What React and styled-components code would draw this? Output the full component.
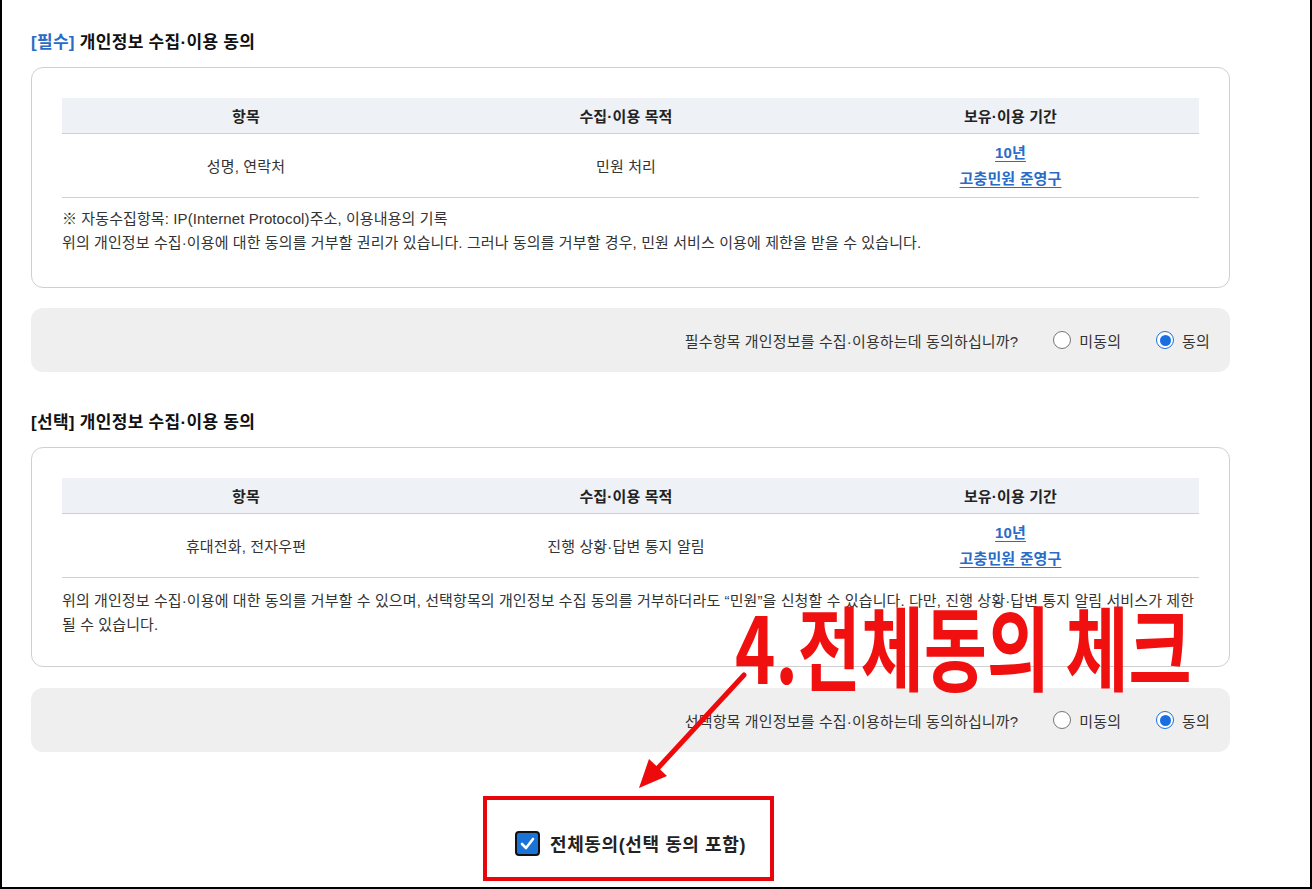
import React from "react";
import styled, { createGlobalStyle } from "styled-components";

const GlobalStyle = createGlobalStyle`
  html, body {
    margin: 0;
    padding: 0;
    background: #ffffff;
  }
  body {
    font-family: "Liberation Sans", "Noto Sans CJK KR", sans-serif;
    color: #333;
  }
`;

const Frame = styled.div`
  position: relative;
  box-sizing: border-box;
  width: 1312px;
  height: 889px;
  border-left: 2px solid #000;
  border-right: 2px solid #000;
  border-bottom: 2px solid #000;
  padding: 31px 80px 0 29px;
  overflow: hidden;
`;

const SectionTitle = styled.h2`
  margin: ${(p) => p.$top || 0}px 0 12px;
  font-size: 17px;
  line-height: 24px;
  font-weight: 700;
  letter-spacing: 0.3px;
  color: #111;
`;

const Tag = styled.span`
  color: ${(p) => (p.$blue ? "#2a6bc6" : "#111")};
`;

const Card = styled.div`
  border: 1px solid #cfcfcf;
  border-radius: 12px;
  padding: 30px 30px ${(p) => p.$bottom}px;
`;

const Table = styled.div`
  display: grid;
  grid-template-columns: 368px 392px 1fr;
`;

const HeadCell = styled.div`
  background: #eef1f5;
  height: 35px;
  border-bottom: 1px solid #cdd0d4;
  display: flex;
  align-items: center;
  justify-content: center;
  font-size: 15px;
  font-weight: 700;
  letter-spacing: 0.15px;
  color: #222;
`;

const BodyCell = styled.div`
  height: 63px;
  border-bottom: 1px solid #cdd0d4;
  display: flex;
  flex-direction: column;
  align-items: center;
  justify-content: center;
  font-size: 15px;
  letter-spacing: 0.15px;
  color: #333;
`;

const Link = styled.a`
  color: #2a6bc6;
  font-weight: 700;
  line-height: 26px;
  text-decoration: underline;
  text-underline-offset: 3px;
`;

const Note = styled.p`
  margin: ${(p) => p.$top}px 0 0;
  font-size: 15px;
  line-height: 24px;
  letter-spacing: 0.1px;
  color: #333;
`;

const AskBar = styled.div`
  margin-top: ${(p) => p.$top}px;
  height: 64px;
  border-radius: 12px;
  background: #efefef;
  display: flex;
  align-items: center;
  justify-content: flex-end;
  padding-right: 20px;
  font-size: 15px;
  letter-spacing: 0.15px;
  color: #333;
`;

const Question = styled.span`
  margin-right: 35px;
`;

const RadioLabel = styled.label`
  display: flex;
  align-items: center;
  gap: 8px;
  margin-left: ${(p) => (p.$first ? 0 : 35)}px;
`;

const RadioDot = styled.span`
  box-sizing: border-box;
  width: 18px;
  height: 18px;
  border-radius: 50%;
  background: #fff;
  border: 1px solid ${(p) => (p.$on ? "#1a6fe0" : "#767676")};
  display: flex;
  align-items: center;
  justify-content: center;
  &::after {
    content: "";
    display: ${(p) => (p.$on ? "block" : "none")};
    width: 11px;
    height: 11px;
    border-radius: 50%;
    background: #1a6fe0;
  }
`;

const AllAgree = styled.div`
  margin-top: 78px;
  display: flex;
  justify-content: center;
  align-items: center;
  gap: 10px;
  font-size: 18px;
  letter-spacing: 0.6px;
  font-weight: 700;
  color: #222;
  height: 26px;
`;

const CheckBox = styled.span`
  box-sizing: border-box;
  width: 25px;
  height: 25px;
  border: 2px solid #111;
  border-radius: 4px;
  background: #1a73d6;
  display: flex;
  align-items: center;
  justify-content: center;
`;

const RedBox = styled.div`
  position: absolute;
  left: 481px;
  top: 796px;
  width: 291px;
  height: 85px;
  box-sizing: border-box;
  border: 4px solid #e8050c;
  pointer-events: none;
`;

const BigNote = styled.div`
  position: absolute;
  left: 733px;
  top: 598px;
  font-family: "Noto Sans CJK KR", sans-serif;
  font-size: 92px;
  line-height: 1;
  font-weight: 700;
  color: #f01010;
  white-space: nowrap;
  transform: scaleX(0.745);
  transform-origin: left top;
  pointer-events: none;
`;

const Arrow = styled.svg`
  position: absolute;
  left: 620px;
  top: 660px;
  pointer-events: none;
`;

function Radio({ on, first, children }) {
  return (
    <RadioLabel $first={first}>
      <RadioDot $on={on} />
      {children}
    </RadioLabel>
  );
}

function Consent({ rows, purpose, notes, noteTop, bottom }) {
  return (
    <Card $bottom={bottom}>
      <Table>
        <HeadCell>항목</HeadCell>
        <HeadCell>수집·이용 목적</HeadCell>
        <HeadCell>보유·이용 기간</HeadCell>
        <BodyCell>{rows}</BodyCell>
        <BodyCell>{purpose}</BodyCell>
        <BodyCell>
          <Link>10년</Link>
          <Link>고충민원 준영구</Link>
        </BodyCell>
      </Table>
      <Note $top={noteTop}>
        {notes.map((n, i) => (
          <React.Fragment key={i}>
            {i > 0 && <br />}
            {n}
          </React.Fragment>
        ))}
      </Note>
    </Card>
  );
}

export default function App() {
  return (
    <>
      <GlobalStyle />
      <Frame>
        <SectionTitle>
          <Tag $blue>[필수]</Tag> 개인정보 수집·이용 동의
        </SectionTitle>
        <Consent
          rows="성명, 연락처"
          purpose="민원 처리"
          noteTop={9}
          bottom={32}
          notes={[
            "※ 자동수집항목: IP(Internet Protocol)주소, 이용내용의 기록",
            "위의 개인정보 수집·이용에 대한 동의를 거부할 권리가 있습니다. 그러나 동의를 거부할 경우, 민원 서비스 이용에 제한을 받을 수 있습니다.",
          ]}
        />
        <AskBar $top={20}>
          <Question>필수항목 개인정보를 수집·이용하는데 동의하십니까?</Question>
          <Radio first>미동의</Radio>
          <Radio on>동의</Radio>
        </AskBar>

        <SectionTitle $top={39}>
          <Tag>[선택]</Tag> 개인정보 수집·이용 동의
        </SectionTitle>
        <Consent
          rows="휴대전화, 전자우편"
          purpose="진행 상황·답변 통지 알림"
          noteTop={11}
          bottom={29}
          notes={[
            "위의 개인정보 수집·이용에 대한 동의를 거부할 수 있으며, 선택항목의 개인정보 수집 동의를 거부하더라도 “민원”을 신청할 수 있습니다. 다만, 진행 상황·답변 통지 알림 서비스가 제한될 수 있습니다.",
          ]}
        />
        <AskBar $top={21}>
          <Question>선택항목 개인정보를 수집·이용하는데 동의하십니까?</Question>
          <Radio first>미동의</Radio>
          <Radio on>동의</Radio>
        </AskBar>

        <AllAgree>
          <CheckBox>
            <svg width="15" height="13" viewBox="0 0 15 13">
              <path d="M2 7 L6 11 L13 2" fill="none" stroke="#fff" strokeWidth="2.6" strokeLinecap="round" strokeLinejoin="round" />
            </svg>
          </CheckBox>
          전체동의(선택 동의 포함)
        </AllAgree>

        <RedBox />
        <BigNote>4.전체동의 체크</BigNote>
        <Arrow width="140" height="140" viewBox="0 0 140 140">
          <line x1="122" y1="15" x2="36" y2="108" stroke="#ee0a0a" strokeWidth="5" strokeLinecap="round" />
          <polygon points="17,128 45,116 27,99" fill="#ee0a0a" />
        </Arrow>
      </Frame>
    </>
  );
}
